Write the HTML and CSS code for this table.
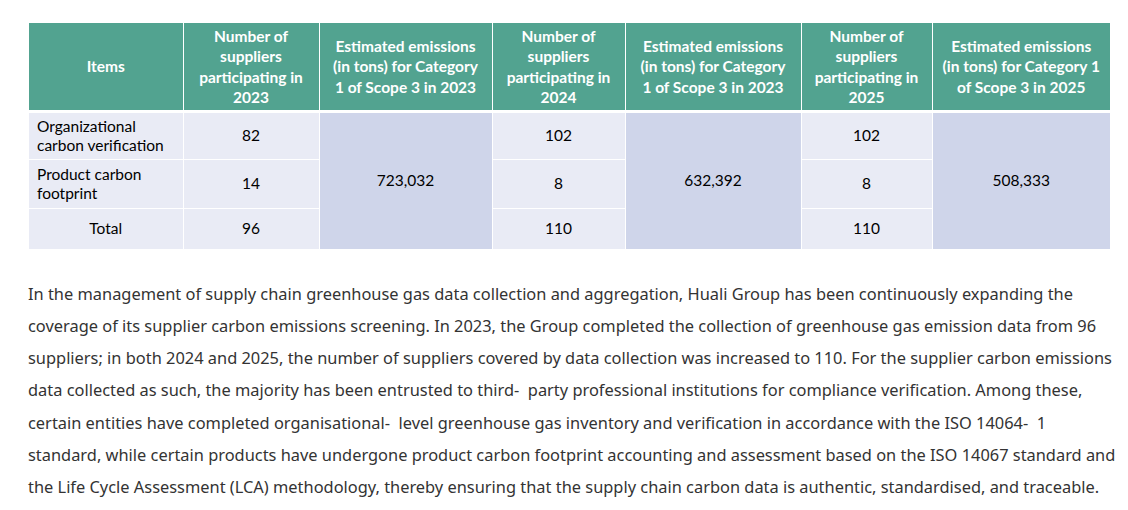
FILE: index.html
```html
<!DOCTYPE html>
<html lang="en">
<head>
<meta charset="utf-8">
<title>Supplier carbon emissions</title>
<link rel="stylesheet" href="styles.css">
</head>
<body>
<div class="page">
  <table class="data">
    <colgroup>
      <col class="c-items">
      <col class="c-n1">
      <col class="c-e1">
      <col class="c-n2">
      <col class="c-e2">
      <col class="c-n3">
      <col class="c-e3">
    </colgroup>
    <thead>
      <tr>
        <th>Items</th>
        <th>Number of<br>suppliers<br>participating in<br>2023</th>
        <th>Estimated emissions<br>(in tons) for Category<br>1 of Scope 3 in 2023</th>
        <th>Number of<br>suppliers<br>participating in<br>2024</th>
        <th>Estimated emissions<br>(in tons) for Category<br>1 of Scope 3 in 2023</th>
        <th>Number of<br>suppliers<br>participating in<br>2025</th>
        <th>Estimated emissions<br>(in tons) for Category 1<br>of Scope 3 in 2025</th>
      </tr>
    </thead>
    <tbody>
      <tr class="r1">
        <td class="label">Organizational carbon verification</td>
        <td>82</td>
        <td class="merged" rowspan="3">723,032</td>
        <td>102</td>
        <td class="merged" rowspan="3">632,392</td>
        <td>102</td>
        <td class="merged" rowspan="3">508,333</td>
      </tr>
      <tr class="r2">
        <td class="label">Product carbon footprint</td>
        <td>14</td>
        <td>8</td>
        <td>8</td>
      </tr>
      <tr class="r3">
        <td>Total</td>
        <td>96</td>
        <td>110</td>
        <td>110</td>
      </tr>
    </tbody>
  </table>
  <p class="text">In the management of supply chain greenhouse gas data collection and aggregation, Huali Group has been continuously expanding the<br>coverage of its supplier carbon emissions screening. In 2023, the Group completed the collection of greenhouse gas emission data from 96<br>suppliers; in both 2024 and 2025, the number of suppliers covered by data collection was increased to 110. For the supplier carbon emissions<br>data collected as such, the majority has been entrusted to third&#8208;&nbsp; party professional institutions for compliance verification. Among these,<br>certain entities have completed organisational&#8208;&nbsp; level greenhouse gas inventory and verification in accordance with the ISO 14064&#8208;&nbsp; 1<br>standard, while certain products have undergone product carbon footprint accounting and assessment based on the ISO 14067 standard and<br>the Life Cycle Assessment (LCA) methodology, thereby ensuring that the supply chain carbon data is authentic, standardised, and traceable.</p>
</div>
</body>
</html>
```
FILE: styles.css
```css
html, body {
  margin: 0;
  padding: 0;
  background: #ffffff;
}

.page {
  padding: 23px 0 0 28px;
  width: 1096px;
}

.data {
  margin-left: 1px;
  width: 1081px;
  table-layout: fixed;
  border-collapse: collapse;
  font-family: Lato, "Liberation Sans", sans-serif;
}

.c-items { width: 154px; }
.c-n1 { width: 136px; }
.c-e1 { width: 173px; }
.c-n2 { width: 133px; }
.c-e2 { width: 176px; }
.c-n3 { width: 131px; }
.c-e3 { width: 178px; }

.data th {
  background: #52a390;
  color: #ffffff;
  font-weight: 700;
  font-size: 15.5px;
  line-height: 20.5px;
  height: 87px;
  padding: 0 2px;
  white-space: nowrap;
  text-align: center;
  vertical-align: middle;
  border-left: 1px solid #ffffff;
  border-right: 1px solid #ffffff;
  border-bottom: 3px solid #ffffff;
}

.data th:first-child { border-left: none; }
.data th:last-child { border-right: none; }

.data td {
  background: #e9ebf5;
  color: #000000;
  font-size: 15.5px;
  line-height: 19.5px;
  text-align: center;
  vertical-align: middle;
  padding: 0 6px;
  border: 1px solid #ffffff;
}

.data td.label {
  text-align: left;
  padding-left: 8px;
}

.data td.merged {
  background: #cfd5ea;
}

.data tr.r1 td { height: 46px; }
.data tr.r2 td { height: 48px; }
.data tr.r3 td { height: 40px; }

.data tr.r3 td { border-bottom: none; }
.data tr td:first-child { border-left: none; }
.data tr td:last-child { border-right: none; }

.text {
  margin: 28px 0 0 0;
  font-family: "Noto Sans", "Open Sans", sans-serif;
  font-size: 16.4px;
  line-height: 32.3px;
  color: #333333;
  white-space: nowrap;
}
```
